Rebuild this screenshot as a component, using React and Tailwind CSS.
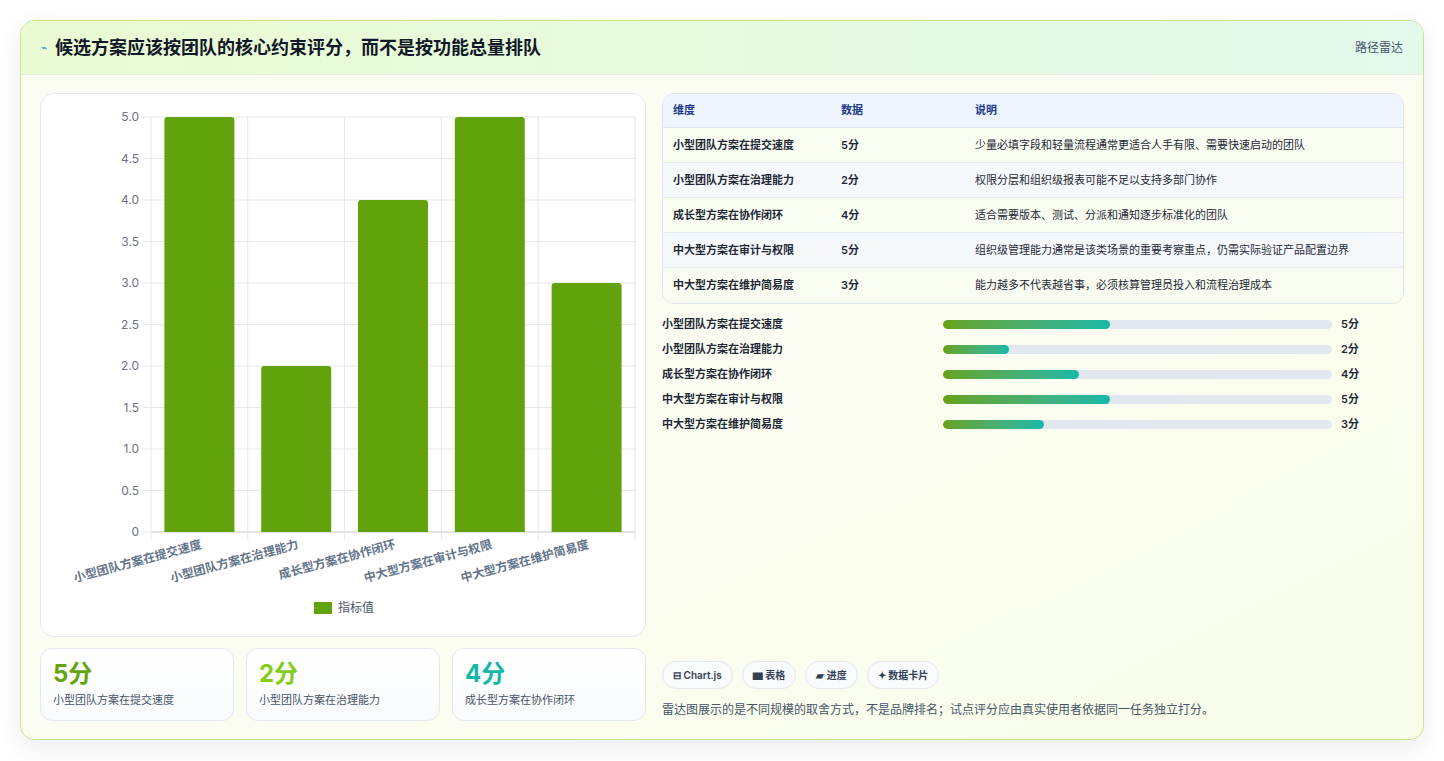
import React from "react";

const rows = [
  ["小型团队方案在提交速度", 5, "少量必填字段和轻量流程通常更适合人手有限、需要快速启动的团队", 43],
  ["小型团队方案在治理能力", 2, "权限分层和组织级报表可能不足以支持多部门协作", 17],
  ["成长型方案在协作闭环", 4, "适合需要版本、测试、分派和通知逐步标准化的团队", 35],
  ["中大型方案在审计与权限", 5, "组织级管理能力通常是该类场景的重要考察重点，仍需实际验证产品配置边界", 43],
  ["中大型方案在维护简易度", 3, "能力越多不代表越省事，必须核算管理员投入和流程治理成本", 26],
];

function Chart() {
  const x0 = 110, x1 = 594, yTop = 23, yBot = 438;
  const u = (yBot - yTop) / 5;
  const cw = (x1 - x0) / 5;
  const ticks = [0, 0.5, 1, 1.5, 2, 2.5, 3, 3.5, 4, 4.5, 5];
  return (
    <svg width="606" height="543" className="block" style={{ fontFamily: "Inter, 'Noto Sans CJK SC', sans-serif" }}>
      {ticks.map((t) => {
        const y = yBot - t * u;
        return (
          <g key={t}>
            <line x1={x0 - 8} x2={x1} y1={y} y2={y} stroke="#e5e7eb" />
            <text x={x0 - 12} y={y + 4} textAnchor="end" fontSize="12" fill="#6b7280">{t === 0 ? "0" : t.toFixed(1)}</text>
          </g>
        );
      })}
      {[0, 1, 2, 3, 4, 5].map((i) => (
        <line key={i} x1={x0 + i * cw} x2={x0 + i * cw} y1={yTop} y2={yBot + 8} stroke="#e5e7eb" />
      ))}
      <line x1={x0} x2={x1} y1={yBot} y2={yBot} stroke="#d1d5db" />
      {rows.map((r, i) => {
        const cx = x0 + cw * (i + 0.5);
        const h = r[1] * u;
        return (
          <g key={i}>
            <path d={`M${cx - 35} ${yBot} V${yBot - h + 3} Q${cx - 35} ${yBot - h} ${cx - 32} ${yBot - h} H${cx + 32} Q${cx + 35} ${yBot - h} ${cx + 35} ${yBot - h + 3} V${yBot} Z`} fill="#62a30d" />
            <text transform={`translate(${cx + 3},${yBot + 16}) rotate(-15)`} textAnchor="end" fontSize="12" fontWeight="600" fill="#64748b">{r[0]}</text>
          </g>
        );
      })}
      <rect x="273" y="508" width="18" height="12" fill="#62a30d" />
      <text x="297" y="518" fontSize="12" fill="#4b5563">指标值</text>
    </svg>
  );
}

export default function App() {
  return (
    <div className="min-h-[761px] bg-white p-5 pb-5" style={{ fontFamily: "Inter, 'Noto Sans CJK SC', sans-serif" }}>
      <div className="rounded-[14px] border border-[#c9e58f] shadow-[0_8px_24px_rgba(0,0,0,0.08)] overflow-hidden bg-gradient-to-br from-[#fbfdf2] via-[#fcfdf2] to-[#f7fde9]">
        <div className="h-[54px] flex items-center justify-between px-5 border-b border-[#e4eedb] bg-gradient-to-r from-[#eafbd2] to-[#e2f9ec]">
          <div className="flex items-center gap-2">
            <span className="text-[#3b82f6] text-[10px]">⌁</span>
            <span className="text-[18px] font-bold text-[#111827]">候选方案应该按团队的核心约束评分，而不是按功能总量排队</span>
          </div>
          <span className="text-[12px] text-[#475569]">路径雷达</span>
        </div>
        <div className="flex gap-4 px-[19px] pt-[18px] pb-[18px]">
          <div className="w-[606px] flex flex-col gap-[11px]">
            <div className="h-[544px] rounded-[14px] border border-[#e2e8f0] bg-white overflow-hidden">
              <Chart />
            </div>
            <div className="grid grid-cols-3 gap-3">
              {[["5分", "#65a30d", rows[0][0]], ["2分", "#84cc16", rows[1][0]], ["4分", "#14b8a6", rows[2][0]]].map(([v, c, l]) => (
                <div key={l} className="h-[73px] rounded-[12px] border border-[#e2e8f0] bg-gradient-to-b from-white to-[#f8fafc] px-3 pt-[10px]">
                  <div className="text-[24px] font-bold leading-[30px]" style={{ color: c }}>{v}</div>
                  <div className="text-[11px] text-[#475569] mt-[3px]">{l}</div>
                </div>
              ))}
            </div>
          </div>
          <div className="flex-1 flex flex-col">
            <div className="rounded-[12px] border border-[#dbe3ee] overflow-hidden text-[11px]">
              <div className="flex h-[34px] items-center bg-[#eef5ff] border-b border-[#dbe3ee] text-[#1e3a8a] font-semibold">
                <div className="w-[178px] pl-[10px]">维度</div>
                <div className="w-[134px]">数据</div>
                <div className="flex-1">说明</div>
              </div>
              {rows.map((r, i) => (
                <div key={i} className={`flex h-[35px] items-center text-[#1f2937] ${i < 4 ? "border-b border-[#e5ebf2]" : ""} ${i % 2 ? "bg-[#f6f9fc]" : "bg-[#f9fcf0]"}`}>
                  <div className="w-[178px] pl-[10px] font-semibold">{r[0]}</div>
                  <div className="w-[134px] font-semibold">{r[1]}分</div>
                  <div className="flex-1">{r[2]}</div>
                </div>
              ))}
            </div>
            <div className="flex flex-col gap-[9px] mt-[12px]">
              {rows.map((r, i) => (
                <div key={i} className="flex items-center h-4 text-[11px] font-semibold text-[#1f2937]">
                  <div className="w-[281px]">{r[0]}</div>
                  <div className="w-[389px] h-[9px] rounded-full bg-[#e2e8f0] overflow-hidden">
                    <div className="h-full rounded-full bg-gradient-to-r from-[#65a30d] to-[#14b8a6]" style={{ width: `${r[3]}%` }} />
                  </div>
                  <div className="ml-[9px]">{r[1]}分</div>
                </div>
              ))}
            </div>
            <div className="flex-1" />
            <div className="flex gap-[9px] text-[10px] font-semibold text-[#334155]">
              {["⊟ Chart.js", "▆ 表格", "▰ 进度", "✦ 数据卡片"].map((t) => (
                <span key={t} className="h-[28px] px-[10px] flex items-center rounded-full border border-[#e2e8f0] bg-[#f8fafc]">{t}</span>
              ))}
            </div>
            <div className="mt-[12px] mb-[2px] text-[12px] text-[#475569]">雷达图展示的是不同规模的取舍方式，不是品牌排名；试点评分应由真实使用者依据同一任务独立打分。</div>
          </div>
        </div>
      </div>
    </div>
  );
}
